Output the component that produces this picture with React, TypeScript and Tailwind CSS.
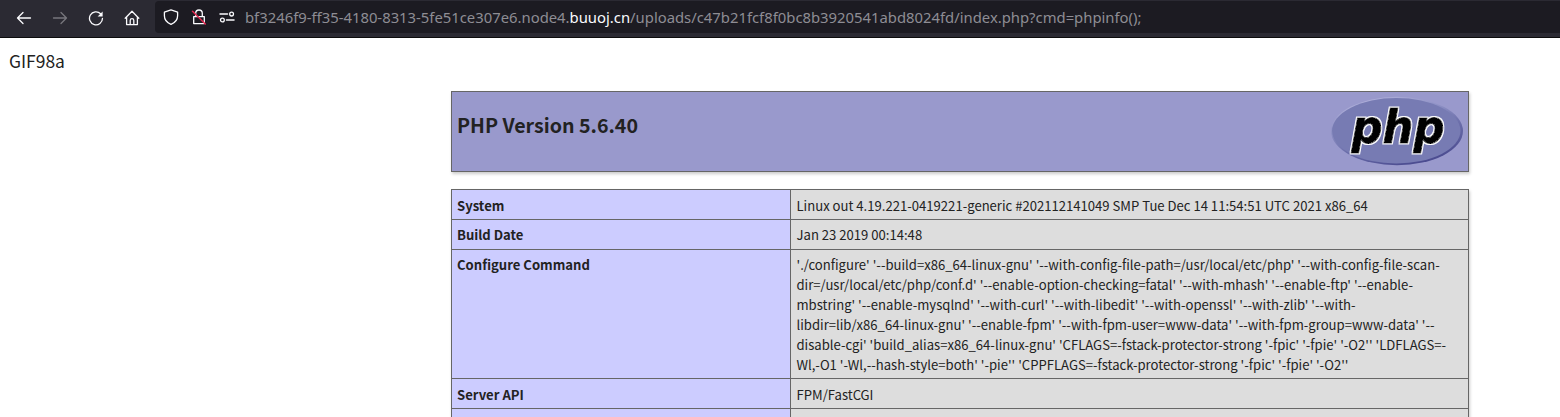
import type { ReactNode } from "react";

const configureLines = [
  "/configure' '--build=x86_64-linux-gnu' '--with-config-file-path=/usr/local/etc/php' '--with-config-file-scan-",
  "dir=/usr/local/etc/php/conf.d' '--enable-option-checking=fatal' '--with-mhash' '--enable-ftp' '--enable-",
  "mbstring' '--enable-mysqlnd' '--with-curl' '--with-libedit' '--with-openssl' '--with-zlib' '--with-",
  "libdir=lib/x86_64-linux-gnu' '--enable-fpm' '--with-fpm-user=www-data' '--with-fpm-group=www-data' '--",
  "disable-cgi' 'build_alias=x86_64-linux-gnu' 'CFLAGS=-fstack-protector-strong '-fpic' '-fpie' '-O2'' 'LDFLAGS=-",
  "Wl,-O1 '-Wl,--hash-style=both' '-pie'' 'CPPFLAGS=-fstack-protector-strong '-fpic' '-fpie' '-O2''",
];

function Icon({ className = "", children }: { className?: string; children: ReactNode }) {
  return (
    <svg
      viewBox="0 0 16 16"
      width="16"
      height="16"
      fill="none"
      stroke="currentColor"
      strokeWidth="1.3"
      strokeLinecap="round"
      strokeLinejoin="round"
      className={`shrink-0 ${className}`}
    >
      {children}
    </svg>
  );
}

function Toolbar() {
  return (
    <header className="flex h-[38px] shrink-0 items-start border-b border-[#0c0c0d] bg-[#2b2a33] text-[#fbfbfe]">
      <nav className="flex h-[35px] w-[155px] shrink-0 items-center gap-5 pl-4">
        <Icon>
          <path d="M14.5 8H1.5M7 2.5 1.5 8 7 13.5" />
        </Icon>
        <Icon className="text-[#77767d]">
          <path d="M1.5 8h13M9 2.5 14.5 8 9 13.5" />
        </Icon>
        <Icon>
          <path d="M12.6 3.7A6.5 6.5 0 1 0 14.5 8.3" />
          <path d="M14.6 1.4v5H9.6z" fill="currentColor" stroke="none" />
        </Icon>
        <Icon>
          <path d="M1.2 8.2 8 1.3l6.8 6.9M2.6 7v7.6h10.8V7M6.2 14.6v-4.2a1.8 1.8 0 0 1 3.6 0v4.2" />
        </Icon>
      </nav>
      <div className="mt-px flex h-8 min-w-0 flex-1 items-center rounded-l bg-[#1c1b22] pl-2">
        <Icon>
          <path d="M8 .9 14.6 3.2v3.5c0 4-2.2 6.8-6.6 8.7C3.6 13.5 1.4 10.7 1.4 6.7V3.2z" />
        </Icon>
        <Icon className="ml-3">
          <path d="M2.7 7.6h10.6v7H2.7zM4.7 7.3V4.3a3.3 3.3 0 0 1 6.6 0v3" />
          <path d="M1.5 2.2 14.3 15" stroke="#e22850" strokeWidth="1.5" />
        </Icon>
        <Icon className="ml-3">
          <path d="M1 5.1h7.5M7.5 11H15" strokeWidth="1.5" />
          <circle cx="12.6" cy="5.1" r="1.9" />
          <circle cx="3.4" cy="11" r="1.9" />
        </Icon>
        <div className="ml-[10px] whitespace-pre font-['Noto_Sans',sans-serif] text-[14.83px] leading-8 text-[#8e8d94]">
          bf3246f9-ff35-4180-8313-5fe51ce307e6.node4.<span className="text-[#fbfbfe]">buuoj.cn</span>
          /uploads/c47b21fcf8f0bc8b3920541abd8024fd/index.php?cmd=phpinfo();
        </div>
      </div>
    </header>
  );
}

function PhpLogo() {
  return (
    <svg width="134" height="70" viewBox="0 0 134 70" className="mt-[4px] shrink-0" aria-label="PHP logo">
      <defs>
        <linearGradient id="rim" x1="0.25" y1="0" x2="0.75" y2="1">
          <stop offset="0" stopColor="#b3b3dc" />
          <stop offset="0.35" stopColor="#8a8dc2" />
          <stop offset="0.6" stopColor="#6a6da9" />
          <stop offset="1" stopColor="#46468c" />
        </linearGradient>
        <filter id="halo" x="-10%" y="-10%" width="120%" height="120%">
          <feMorphology in="SourceAlpha" operator="dilate" radius="1.3" result="grown" />
          <feFlood floodColor="#ffffff" />
          <feComposite in2="grown" operator="in" result="white" />
          <feGaussianBlur in="white" stdDeviation="0.5" />
          <feMerge>
            <feMergeNode />
            <feMergeNode in="SourceGraphic" />
          </feMerge>
        </filter>
      </defs>
      <ellipse cx="67" cy="35" rx="66" ry="34.2" fill="url(#rim)" />
      <ellipse cx="66.3" cy="34.8" rx="64.2" ry="32.7" fill="#777bb3" />
      <text
        x="21.5"
        y="46.5"
        textLength="93"
        lengthAdjust="spacingAndGlyphs"
        fontFamily="DejaVu Sans"
        fontWeight="bold"
        fontStyle="italic"
        fontSize="46"
        fill="#000"
        stroke="#000"
        strokeWidth="1"
        filter="url(#halo)"
      >
        php
      </text>
    </svg>
  );
}

function Row({ name, pad, children }: { name?: string; pad: string; children?: ReactNode }) {
  return (
    <div className="grid grid-cols-[338px_1fr] gap-px">
      <div className={`bg-[#ccccff] px-[5px] font-bold ${pad}`}>{name}</div>
      <div className={`whitespace-pre bg-[#dddddd] pl-[5.5px] ${pad}`}>{children}</div>
    </div>
  );
}

export default function App() {
  return (
    <div className="flex h-[417px] flex-col overflow-hidden bg-white font-['Noto_Sans_CJK_SC',sans-serif] text-[#222222]">
      <Toolbar />
      <main className="flex shrink-0 flex-col">
        <p className="ml-[9px] mt-[10px] text-[17.45px] leading-[26px]">GIF98a</p>
        <div className="ml-[451px] w-[1018px] text-[13.1px] leading-5">
          <section className="mt-[17px] flex h-[81px] justify-between border border-[#666666] bg-[#9999cc] pl-[5px] pr-1 shadow-[1px_2px_3px_#cccccc]">
            <h1 className="mt-[18px] text-[19.63px] font-bold leading-[30px]">PHP Version 5.6.40</h1>
            <PhpLogo />
          </section>
          <section className="mt-[17px] flex flex-col gap-px border border-[#666666] bg-[#666666] shadow-[1px_2px_3px_#cccccc]">
            <Row name="System" pad="pt-[6px] pb-[3px]">
              Linux out 4.19.221-0419221-generic #202112141049 SMP Tue Dec 14 11:54:51 UTC 2021 x86_64
            </Row>
            <Row name="Build Date" pad="pt-[5px] pb-1">Jan 23 2019 00:14:48</Row>
            <Row name="Configure Command" pad="pt-[5px] pb-[3px]">
              {configureLines.map((line, index) => (
                <div key={line}>
                  {index === 0 && <span className="[font-kerning:none]">'.</span>}
                  {line}
                </div>
              ))}
            </Row>
            <Row name="Server API" pad="pt-[6px] pb-[3px]">FPM/FastCGI</Row>
            <Row pad="py-4" />
          </section>
        </div>
      </main>
    </div>
  );
}
